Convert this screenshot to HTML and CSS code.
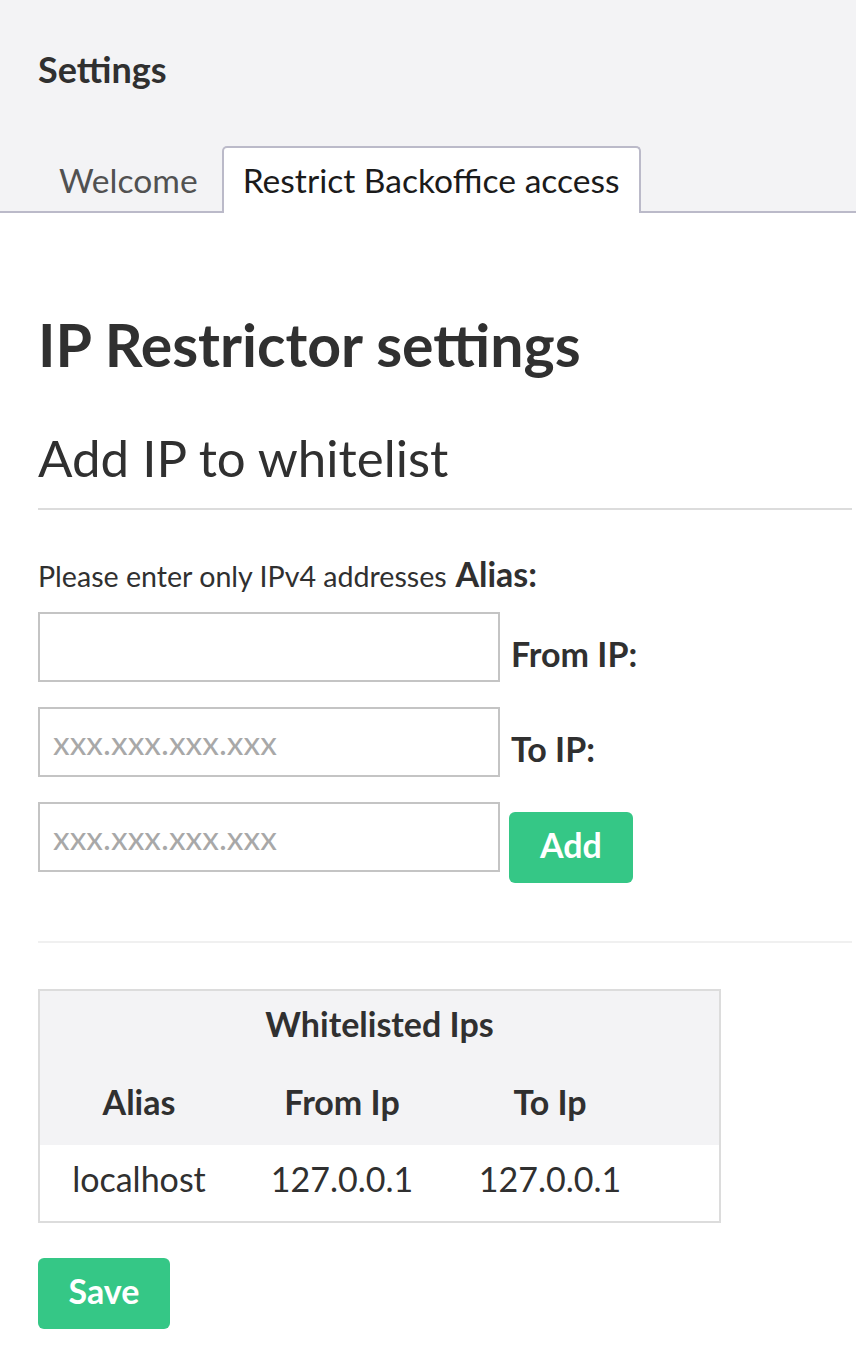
FILE: index.html
```html
<!DOCTYPE html>
<html lang="en">
<head>
<meta charset="utf-8">
<title>Settings</title>
<link rel="stylesheet" href="styles.css">
</head>
<body>
<header class="top">
  <div class="top-title">Settings</div>
  <nav class="tabs">
    <a class="tab">Welcome</a>
    <a class="tab tab-active">Restrict Backoffice access</a>
  </nav>
</header>
<main class="content">
  <h1 class="page-title">IP Restrictor settings</h1>
  <h2 class="section-title">Add IP to whitelist</h2>
  <form class="ip-form">
    <div class="hint-line"><span class="hint">Please enter only IPv4 addresses</span> <label class="field-label">Alias:</label></div>
    <div class="field-row row-first">
      <input class="field-input" type="text">
      <label class="field-label row-label">From IP:</label>
    </div>
    <div class="field-row">
      <input class="field-input" type="text" placeholder="xxx.xxx.xxx.xxx">
      <label class="field-label row-label">To IP:</label>
    </div>
    <div class="field-row">
      <input class="field-input" type="text" placeholder="xxx.xxx.xxx.xxx">
      <button class="btn btn-add" type="button">Add</button>
    </div>
  </form>
  <hr class="divider">
  <div class="table-wrap">
    <table class="ip-table">
      <caption class="ip-caption">Whitelisted Ips</caption>
      <thead>
        <tr><th>Alias</th><th>From Ip</th><th>To Ip</th><th class="spacer"></th></tr>
      </thead>
      <tbody>
        <tr><td>localhost</td><td>127.0.0.1</td><td>127.0.0.1</td><td class="spacer"></td></tr>
      </tbody>
    </table>
  </div>
  <button class="btn btn-save" type="button">Save</button>
</main>
</body>
</html>
```
FILE: styles.css
```css
* { box-sizing: border-box; }
html, body { margin: 0; padding: 0; background: #fff; }
body {
  font-family: Lato, "Open Sans", sans-serif;
  color: #303030;
}
.top {
  background: #f3f3f5;
  border-bottom: 2px solid #bbbac9;
  padding: 0 0 0 38px;
  height: 213px;
  display: flex;
  flex-direction: column;
  justify-content: space-between;
}
.top-title {
  font-size: 36px;
  font-weight: 700;
  margin-top: 49px;
  line-height: 40px;
}
.tabs {
  display: flex;
  gap: 3px;
  margin-bottom: -2px;
}
.tab {
  display: block;
  font-size: 33.6px;
  line-height: 65px;
  padding: 0 19px;
  border: 2px solid transparent;
  border-bottom: 0;
  border-radius: 5px 5px 0 0;
  color: #515151;
  height: 67px;
}
.tab-active {
  background: #fff;
  border-color: #bbbac9;
  color: #1b1b1b;
}
.content {
  padding: 0 4px 0 38px;
}
.page-title {
  margin: 97px 0 0;
  font-size: 59px;
  font-weight: 700;
  line-height: 70px;
}
.section-title {
  margin: 50px 0 0;
  font-size: 51px;
  font-weight: 400;
  line-height: 56px;
  padding-bottom: 22px;
  border-bottom: 2px solid #dcdcdc;
}
.ip-form {
  margin-top: 44px;
  display: flex;
  flex-direction: column;
  gap: 25px;
}
.hint-line {
  font-size: 34px;
  line-height: 40px;
  height: 40px;
  white-space: nowrap;
}
.hint { font-size: 28.6px; }
.field-label {
  font-size: 34px;
  font-weight: 700;
  line-height: 40px;
}
.field-row {
  display: flex;
  align-items: flex-start;
}
.row-first { margin-top: -7px; }
.field-input {
  width: 462px;
  height: 70px;
  border: 2px solid #c4c4c4;
  border-radius: 0;
  padding: 0 13px;
  font-family: Lato, sans-serif;
  font-size: 33.5px;
  color: #303030;
  background: #fff;
}
.field-input::placeholder { color: #a8a8a8; }
.row-label {
  margin-left: 11px;
  margin-top: 22px;
}
.btn {
  border: 0;
  border-radius: 6px;
  background: #35c786;
  color: #fff;
  font-family: Lato, sans-serif;
  font-weight: 700;
  font-size: 34px;
  height: 71px;
  padding: 0 0 7px;
}
.btn-add {
  margin-left: 9px;
  margin-top: 10px;
  width: 124px;
}
.divider {
  border: 0;
  border-top: 2px solid #f0f0f0;
  margin: 58px 0 0;
}
.table-wrap {
  margin-top: 46px;
  width: 683px;
  border: 2px solid #dcdcdc;
  padding-bottom: 8px;
  background: #fff;
}
.ip-table {
  width: 100%;
  border-collapse: collapse;
  font-size: 34px;
}
.ip-caption {
  background: #f3f3f5;
  font-weight: 700;
  font-size: 34px;
  line-height: 40px;
  padding: 13px 0 14px;
}
.ip-table thead tr { background: #f3f3f5; }
.ip-table th, .ip-table td {
  text-align: center;
  padding: 0;
  line-height: 40px;
}
.ip-table th { font-weight: 700; height: 87px; }
.ip-table td { height: 68px; }
.ip-table th:nth-child(1), .ip-table td:nth-child(1) { width: 198px; }
.ip-table th:nth-child(2), .ip-table td:nth-child(2) { width: 208px; }
.ip-table th:nth-child(3), .ip-table td:nth-child(3) { width: 208px; }
.btn-save {
  display: block;
  margin-top: 35px;
  width: 132px;
}
```
